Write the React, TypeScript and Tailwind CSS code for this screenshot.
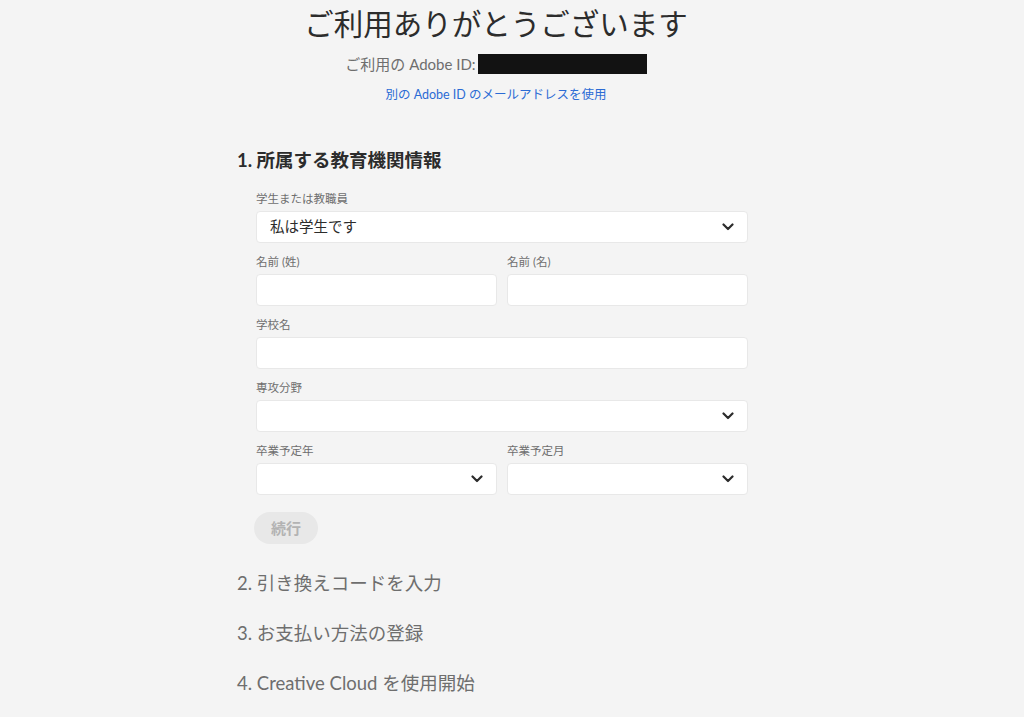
import { ReactNode } from 'react';

const font = { fontFamily: 'Lato, "Noto Sans CJK JP", sans-serif' };

function Chevron() {
  return (
    <svg width="12" height="8" viewBox="0 0 12 8" className="shrink-0">
      <path d="M1.5 1.5 L6 6 L10.5 1.5" fill="none" stroke="#2c2c2c" strokeWidth="2.2" strokeLinecap="round" strokeLinejoin="round" />
    </svg>
  );
}

function Field({ label, children }: { label: string; children: ReactNode }) {
  return (
    <div className="flex flex-col min-w-0 flex-1">
      <label className="text-[11.5px] leading-[14px] text-[#6e6e6e] h-[19px]">{label}</label>
      {children}
    </div>
  );
}

function TextBox() {
  return <div className="h-[32px] bg-white border border-[#e8e8e8] rounded-[4px]" />;
}

function SelectBox({ value }: { value?: string }) {
  return (
    <div className="h-[32px] bg-white border border-[#e8e8e8] rounded-[4px] flex items-center justify-between pl-[13px] pr-[13px]">
      <span className="text-[14.5px] text-[#2c2c2c]">{value}</span>
      <Chevron />
    </div>
  );
}

const steps = ['2. 引き換えコードを入力', '3. お支払い方法の登録', '4. Creative Cloud を使用開始'];

export default function App() {
  return (
    <div className="min-h-[717px] bg-[#f4f4f4] pr-[32px]" style={font}>
      <div className="flex flex-col items-center pt-[4px]">
        <h1 className="text-[29.5px] leading-[40px] text-[#2c2c2c]">ご利用ありがとうございます</h1>
        <div className="flex items-center mt-[10px] h-[20px]">
          <span className="text-[15px] text-[#6e6e6e]">ご利用の Adobe ID:</span>
          <span className="ml-[2px] w-[169px] h-[20px] bg-[#121212]" />
        </div>
        <a className="mt-[13px] text-[12.5px] leading-[16px] text-[#2b6bd4]">別の Adobe ID のメールアドレスを使用</a>
      </div>

      <div className="w-[520px] mx-auto mt-[45px] pl-[1px]">
        <h2 className="text-[18.5px] leading-[24px] font-bold text-[#2c2c2c]">1. 所属する教育機関情報</h2>
        <div className="pl-[19px] pr-[8px] mt-[20px] flex flex-col gap-[12px]">
          <Field label="学生または教職員">
            <SelectBox value="私は学生です" />
          </Field>
          <div className="flex gap-[10px]">
            <Field label="名前 (姓)">
              <TextBox />
            </Field>
            <Field label="名前 (名)">
              <TextBox />
            </Field>
          </div>
          <Field label="学校名">
            <TextBox />
          </Field>
          <Field label="専攻分野">
            <SelectBox />
          </Field>
          <div className="flex gap-[10px]">
            <Field label="卒業予定年">
              <SelectBox />
            </Field>
            <Field label="卒業予定月">
              <SelectBox />
            </Field>
          </div>
          <div className="pt-[5px]">
            <button className="h-[32px] w-[64px] -ml-[2px] rounded-full bg-[#e8e8e8] text-[#b3b3b3] text-[15px] font-bold">
              続行
            </button>
          </div>
        </div>
        <div className="mt-[27px] flex flex-col gap-[26px]">
          {steps.map((s) => (
            <h3 key={s} className="text-[18.5px] leading-[24px] text-[#6e6e6e]">
              {s}
            </h3>
          ))}
        </div>
      </div>
    </div>
  );
}
